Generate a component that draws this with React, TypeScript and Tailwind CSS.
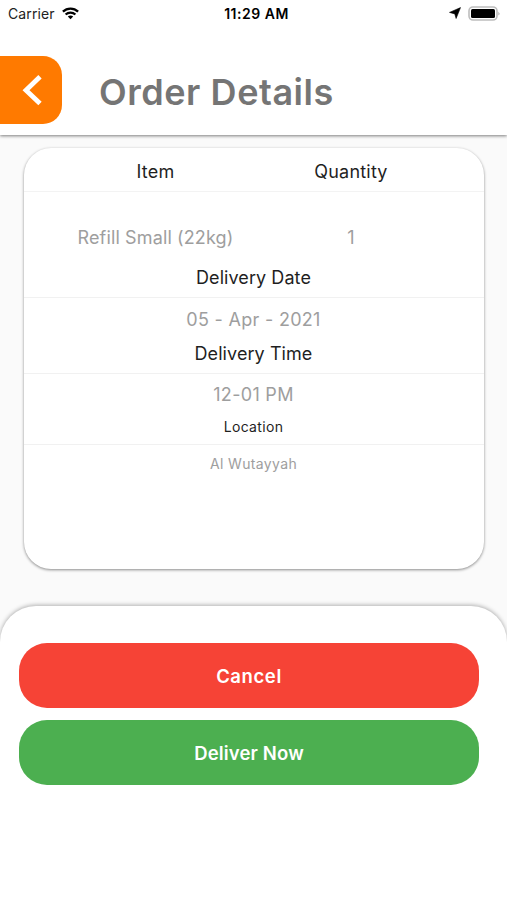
import type { ReactNode } from 'react';

function StatusBar() {
  return (
    <div className="grid h-7 grid-cols-3 items-center text-black">
      <div className="flex items-center gap-[7px] pl-2">
        <span className="text-[14px] leading-7 tracking-[0.1px] text-[#222]">Carrier</span>
        <svg className="mb-0.5" width="17" height="13" viewBox="0 0 17 13" fill="none" stroke="#000" strokeWidth="2.3">
          <path d="M0.9 4.6C5.2 0.5 11.8 0.5 16.1 4.6" />
          <path d="M3.6 7.5C6.4 4.9 10.6 4.9 13.4 7.5" />
          <path d="M8.5 12.2L5.8 9.5C7.3 8.1 9.7 8.1 11.2 9.5Z" fill="#000" stroke="none" />
        </svg>
      </div>
      <span className="pl-1.5 text-center text-[14px] leading-7 font-semibold tracking-[0.5px]">11:29 AM</span>
      <div className="flex items-center justify-end gap-[7px] pr-[6px] pb-0.5">
        <svg width="12" height="12" viewBox="0 0 12 12">
          <path d="M11.5 0.6L7.1 11.5L5.8 6.9L0.5 5.4Z" fill="#000" stroke="#000" strokeWidth="0.6" />
        </svg>
        <svg width="33" height="15" viewBox="0 0 33 15">
          <rect x="1" y="1" width="28" height="13" rx="4" fill="#fff" stroke="#bdbdbd" strokeWidth="1.6" />
          <rect x="3" y="3" width="24" height="9" rx="1.5" fill="#000" />
          <path d="M30.5 5.5Q32.3 7.5 30.5 9.5Z" fill="#999" />
        </svg>
      </div>
    </div>
  );
}

function Header() {
  return (
    <header className="relative h-[135px] bg-white shadow-[0_1px_3px_rgba(0,0,0,0.5)]">
      <StatusBar />
      <div className="mt-7 flex h-[68px] items-center">
        <button className="flex h-[68px] w-[62px] items-center rounded-r-[19px] bg-[#ff7a00] pl-[22px]" aria-label="Back">
          <svg width="20" height="31" viewBox="0 0 20 31" fill="none" stroke="#fff" strokeWidth="4.8">
            <path d="M18 1.8L4 15.2L18 28.6" />
          </svg>
        </button>
        <h1 className="ml-[37px] pt-1 text-[36px] leading-none font-semibold tracking-[0.55px] whitespace-nowrap text-[#757575]">
          Order Details
        </h1>
      </div>
    </header>
  );
}

function Title({ children }: { children: ReactNode }) {
  return <div className="text-center text-[18px] tracking-[0.07px] text-[#1f1f1f]">{children}</div>;
}

function OrderCard() {
  return (
    <section className="mx-auto mt-[13px] h-[421px] w-[460px] rounded-[27px] bg-white shadow-[0_1px_3px_rgba(0,0,0,0.45)]">
      <div className="flex h-[44px] items-center border-b border-[#f3f3f3] pt-[3px] text-[18px] tracking-[0.2px] text-[#1f1f1f]">
        <span className="ml-[34px] w-[196px] text-center">Item</span>
        <span className="w-[195px] text-center">Quantity</span>
      </div>
      <div className="flex h-[64px] items-end pb-[5px] text-[18px] tracking-[0.13px] text-[#9e9e9e]">
        <span className="ml-[34px] w-[196px] text-center">Refill Small (22kg)</span>
        <span className="w-[195px] text-center">1</span>
      </div>
      <div className="flex h-[42px] items-center justify-center border-b border-[#f1f1f1] pt-px">
        <Title>Delivery Date</Title>
      </div>
      <div className="flex h-[42px] items-center justify-center text-[18px] tracking-[0.3px] text-[#9e9e9e]">05 - Apr - 2021</div>
      <div className="flex h-[34px] items-start justify-center border-b border-[#f1f1f1]">
        <Title>Delivery Time</Title>
      </div>
      <div className="flex h-[41px] items-center justify-center text-[18px] tracking-[0.3px] text-[#9e9e9e]">12-01 PM</div>
      <div className="flex h-[30px] items-start justify-center border-b border-[#f1f1f1] pt-px text-[14px] leading-[21px] tracking-[0.35px] text-[#1f1f1f]">
        Location
      </div>
      <div className="flex h-[36px] items-center justify-center text-[14px] tracking-[0.35px] text-[#9e9e9e]">Al Wutayyah</div>
    </section>
  );
}

export default function App() {
  return (
    <main className="flex h-[900px] w-[507px] flex-col overflow-hidden bg-[#fafafa] font-['Inter',sans-serif]">
      <Header />
      <OrderCard />
      <footer className="mt-[37px] flex flex-1 flex-col gap-[12px] rounded-t-[36px] bg-white pr-[28px] pl-[19px] pt-[37px] shadow-[0_-1px_4px_rgba(0,0,0,0.3)]">
        <button className="h-[65px] rounded-[28px] bg-[#f64336] pt-[3px] text-[18.5px] font-semibold tracking-[0.6px] text-white">Cancel</button>
        <button className="h-[65px] rounded-[28px] bg-[#4caf50] pt-[3px] text-[18.5px] font-semibold tracking-[0.15px] text-white">Deliver Now</button>
      </footer>
    </main>
  );
}
